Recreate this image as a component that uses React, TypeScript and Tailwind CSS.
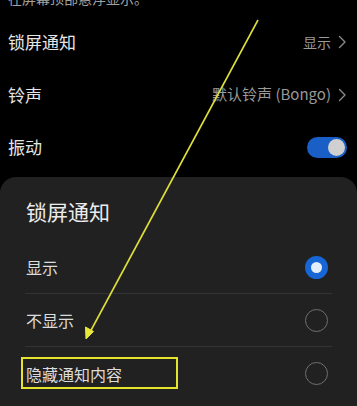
// Lock screen notification settings with bottom sheet picker

const font = { fontFamily: '"Noto Sans CJK SC", "Noto Sans", sans-serif' }

function Chevron() {
  return (
    <svg className="w-[9px] h-[14px] ml-[7px]" viewBox="0 0 9 14" fill="none" aria-hidden="true">
      <path d="M1.5 1.5L7 7L1.5 12.5" stroke="#8a8a8a" strokeWidth={1.4} strokeLinecap="round" strokeLinejoin="round" />
    </svg>
  )
}

function Radio({ checked }: { checked?: boolean }) {
  if (checked) {
    return (
      <div className="w-[23px] h-[23px] rounded-full bg-[#1766d6] flex items-center justify-center">
        <div className="w-[11px] h-[11px] rounded-full bg-[#e3eefb]" />
      </div>
    )
  }
  return <div className="w-[23px] h-[23px] rounded-full border-[1.5px] border-[#6f6f6f]" />
}

const options = [
  { label: '显示', checked: true },
  { label: '不显示', checked: false },
  { label: '隐藏通知内容', checked: false },
]

export default function App() {
  return (
    <div className="relative w-[357px] h-[406px] bg-black overflow-hidden" style={font}>
      {/* hint text, scrolled partly out of view */}
      <div className="h-[16px] overflow-hidden">
        <div className="-mt-[9px] pl-[8px] text-[14px] leading-[15px] text-[#a0a0a0]">在屏幕顶部悬浮显示。</div>
      </div>

      {/* settings rows */}
      <div className="h-[52px] flex items-center justify-between pl-[8px] pr-[10px]">
        <span className="text-[17px] text-[#e6e6e6]">锁屏通知</span>
        <div className="flex items-center">
          <span className="text-[14px] text-[#9a9a9a]">显示</span>
          <Chevron />
        </div>
      </div>
      <div className="h-[53px] flex items-center justify-between pl-[8px] pr-[10px]">
        <span className="text-[17px] text-[#e6e6e6]">铃声</span>
        <div className="flex items-center">
          <span className="text-[15px] text-[#9a9a9a]">默认铃声 (Bongo)</span>
          <Chevron />
        </div>
      </div>
      <div className="h-[52px] flex items-center justify-between pl-[8px] pr-[10px]">
        <span className="text-[17px] text-[#e6e6e6]">振动</span>
        <div className="w-[40px] h-[21px] rounded-full bg-[#1a5fc6] flex items-center justify-end pr-[2px]">
          <div className="w-[17px] h-[17px] rounded-full bg-[#d0d0d0]" />
        </div>
      </div>

      {/* bottom sheet */}
      <div className="mt-[4px] rounded-t-[16px] bg-[#212121] h-[240px] pt-[22px]">
        <div className="pl-[26px] text-[21px] leading-[24px] text-[#ececec]">锁屏通知</div>
        <div className="mt-[18px] mx-[25px]">
          {options.map((o, i) => (
            <div
              key={o.label}
              className={`h-[53px] flex items-center justify-between pl-[1px] pr-[4px] ${i < options.length - 1 ? 'border-b border-[#333333]' : ''}`}
            >
              <span className="text-[16px] text-[#dcdcdc]">{o.label}</span>
              <Radio checked={o.checked} />
            </div>
          ))}
        </div>
      </div>

      {/* annotation highlight box */}
      <div className="absolute left-[21px] top-[357px] w-[157px] h-[32px] border-2 border-[#e4e42c]" />

      {/* annotation arrow */}
      <svg className="absolute inset-0 w-[357px] h-[406px] pointer-events-none" viewBox="0 0 357 406" fill="none" aria-hidden="true">
        <line x1="258" y1="20" x2="89" y2="334" stroke="#dede3a" strokeWidth={1.6} />
        <path d="M86 339L85.5 327L93.5 331.5Z" fill="#e8e83a" stroke="#e8e83a" strokeWidth={1} strokeLinejoin="round" />
      </svg>
    </div>
  )
}
